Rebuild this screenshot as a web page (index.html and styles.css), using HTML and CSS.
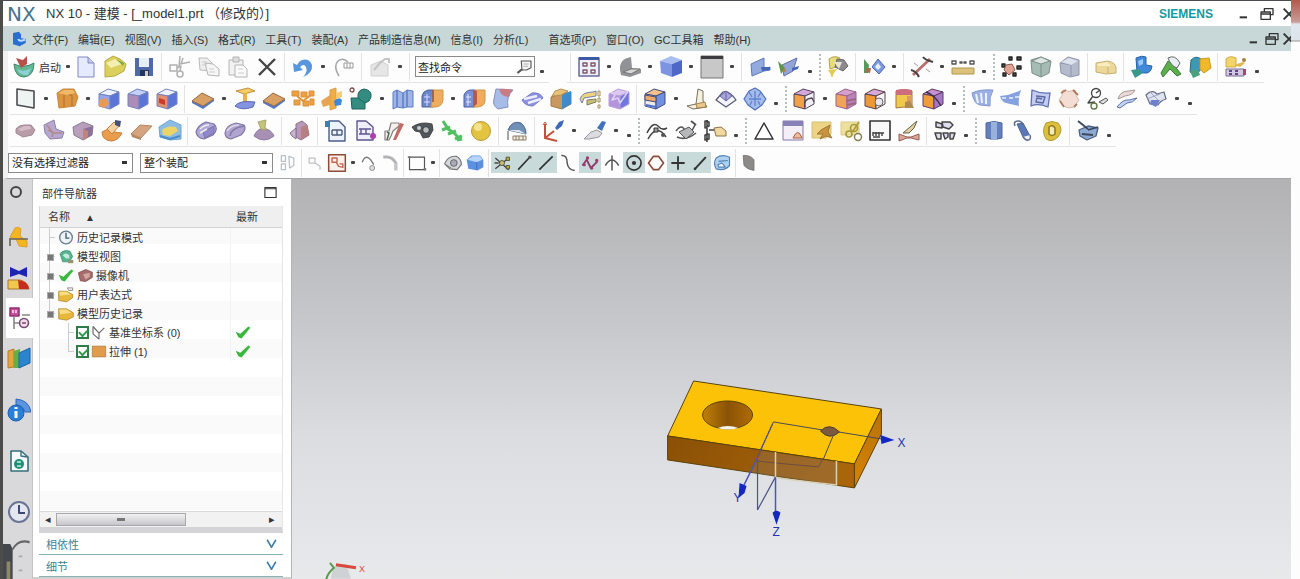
FILE: index.html
```html
<!DOCTYPE html>
<html lang="zh-CN">
<head>
  <meta charset="UTF-8">
  <title>NX 10 - 建模</title>
  <meta name="viewport" content="width=device-width, initial-scale=1.0">
  <link rel="stylesheet" href="styles.css">
</head>
<body>

<div class="app">

  <!-- Title bar -->
  <header class="titlebar">
    <span class="logo">NX</span>
    <h1>NX 10 - 建模 - [_model1.prt （修改的）]</h1>
    <span class="brand">SIEMENS</span>
    <div class="win-buttons">
      <button aria-label="最小化" data-icon="winMin"></button>
      <button aria-label="还原" data-icon="winRestore"></button>
      <button aria-label="关闭" data-icon="winClose"></button>
    </div>
  </header>

  <!-- Menu -->
  <nav class="menubar">
    <span class="menu-logo" data-icon="nxPart"></span>
    <a href="#">文件(F)</a>
    <a href="#">编辑(E)</a>
    <a href="#">视图(V)</a>
    <a href="#">插入(S)</a>
    <a href="#">格式(R)</a>
    <a href="#">工具(T)</a>
    <a href="#">装配(A)</a>
    <a href="#">产品制造信息(M)</a>
    <a href="#">信息(I)</a>
    <a href="#">分析(L)</a>
    <a href="#" class="apart">首选项(P)</a>
    <a href="#">窗口(O)</a>
    <a href="#">GC工具箱</a>
    <a href="#">帮助(H)</a>
    <div class="win-buttons small">
      <button aria-label="最小化部件" data-icon="winMin"></button>
      <button aria-label="还原部件" data-icon="winRestore"></button>
      <button aria-label="关闭部件" data-icon="winClose"></button>
    </div>
  </nav>

  <!-- Toolbars, data-tools is filled in by script.js -->
  <div class="toolbars">
    <div class="row row-main">
      <div class="group">
        <button class="start"><span data-icon="start"></span>启动<i class="dot-mark"></i></button>
        <span class="tools" data-tools="newFile open save | cut copy paste remove | undo . redo | note . |"></span>
        <div class="search">
          <input type="text" aria-label="查找命令" value="查找命令">
          <span data-icon="find"></span>
        </div>
        <span class="tools" data-tools=","></span>
      </div>
      <div class="group" data-tools="| fitView . shade . cubeBlue . background . | section sectionEdit , # faceSelect | wave . | measure . ruler , # explode shield boxGray | boxYellow | partBlue partGreen partTeal | calc ,"></div>
    </div>
    <div class="row">
      <div class="group" data-tools="plane . extrude . cubeHole cubePad cubeRed | slab . loft slab pattern boss unite . fold blend . blendTwo draft shell trim tube scale | cubeTop . bracket facet globe , # cubePink . cubeCut cubeFillet canister cubeSplit , # surfOne surfTwo surfText patch circles strips mesh . ,"></div>
    </div>
    <div class="row">
      <div class="group" data-tools="pill seat hexPart elbow bar hexYellow | lens lensTwo cone | tower | docIn docOut stitch cam comb ball | fan | csys . brush . , # curve curveTwo bridge , # triangle panel noteEdit noteLink textBox bow | parts , # cylinder pin ring | brushCube ,"></div>
    </div>
    <div class="row row-select">
      <select class="filter" aria-label="类型过滤器"><option>没有选择过滤器</option></select>
      <select class="scope" aria-label="选择范围"><option>整个装配</option></select>
      <div class="group picks" data-tools="dimPair | dimSmall snapBox . dimHook dimArc | rect . | eye cubeSmall |"></div>
      <div class="group snaps" data-tools="*snapAll *lineA *lineB snapCurve *snapPoly snapTee *snapCenter snapQuad *snapPlus *lineC snapFace"></div>
      <div class="group" data-tools="| leaf"></div>
    </div>
  </div>

  <main class="work">

    <!-- Resource bar -->
    <nav class="resources">
      <button aria-label="选项" class="res first" data-icon="gear"></button>
      <button aria-label="装配导航器" class="res" data-icon="navAssembly"></button>
      <button aria-label="约束导航器" class="res" data-icon="navConstraint"></button>
      <button aria-label="部件导航器" class="res active" data-icon="navPart"></button>
      <button aria-label="重用库" class="res" data-icon="books"></button>
      <button aria-label="HD3D" class="res tall" data-icon="info"></button>
      <button aria-label="浏览器" class="res tall" data-icon="webDoc"></button>
      <button aria-label="历史记录" class="res tall" data-icon="clock"></button>
      <span class="pen" data-icon="pen"></span>
    </nav>

    <!-- Part navigator -->
    <section class="navigator">
      <div class="nav-title">
        <h2>部件导航器</h2>
        <button aria-label="取消停靠" data-icon="dock"></button>
      </div>
      <div class="tree">
        <table>
          <thead>
            <tr><th>名称 <span class="sort">▲</span></th><th class="latest">最新</th></tr>
          </thead>
          <tbody>
            <tr><td><div class="node"><span class="twig"></span><span data-icon="history"></span>历史记录模式</div></td><td></td></tr>
            <tr><td><div class="node"><span class="twig plus"></span><span data-icon="views"></span>模型视图</div></td><td></td></tr>
            <tr><td><div class="node"><span class="twig plus"></span><span data-icon="tick"></span><span data-icon="camera"></span>摄像机</div></td><td></td></tr>
            <tr><td><div class="node"><span class="twig plus"></span><span data-icon="folderUser"></span>用户表达式</div></td><td></td></tr>
            <tr><td><div class="node"><span class="twig plus end"></span><span data-icon="folder"></span>模型历史记录</div></td><td></td></tr>
            <tr><td><div class="node sub"><span class="twig"></span><input type="checkbox" aria-label="基准坐标系" checked><span data-icon="datum"></span>基准坐标系 (0)</div></td><td><span data-icon="tick"></span></td></tr>
            <tr><td><div class="node sub"><span class="twig end"></span><input type="checkbox" aria-label="拉伸" checked><span data-icon="block"></span>拉伸 (1)</div></td><td><span data-icon="tick"></span></td></tr>
          </tbody>
        </table>
        <div class="scroll">
          <span class="arrow">◂</span>
          <span class="thumb"></span>
          <span class="arrow">▸</span>
        </div>
      </div>
      <button class="fold">相依性<span data-icon="chevron"></span></button>
      <button class="fold">细节<span data-icon="chevron"></span></button>
    </section>

    <!-- Graphics window -->
    <section class="viewport">
      <svg viewBox="291 179 1000 400" preserveAspectRatio="xMidYMid meet" role="img" aria-label="模型">
        <defs>
          <linearGradient id="front" x1="0" x2="1" y1="0" y2="0.2">
            <stop offset="0" stop-color="#8a5006"/>
            <stop offset="1" stop-color="#a9650a"/>
          </linearGradient>
          <linearGradient id="side" x1="0" x2="0" y1="0" y2="1">
            <stop offset="0" stop-color="#b8720c"/>
            <stop offset="1" stop-color="#d68400"/>
          </linearGradient>
          <linearGradient id="bore" x1="0" x2="1" y1="0" y2="0">
            <stop offset="0" stop-color="#c08008"/>
            <stop offset="0.5" stop-color="#8a5206"/>
            <stop offset="1" stop-color="#b06c06"/>
          </linearGradient>
        </defs>
        <g stroke="#5a4208" stroke-width="1" stroke-linejoin="round">
          <path d="M693 381L881 409L854 464L667 436Z" fill="#fcc208"/>
          <path d="M667 436L854 464V488L667 460Z" fill="url(#front)"/>
          <path d="M881 409V434L854 488V464Z" fill="url(#side)"/>
          <ellipse cx="727" cy="415" rx="25" ry="14" fill="url(#bore)"/>
        </g>
        <path d="M717 428Q727 424 738 428Q727 431 717 428Z" fill="#f2f2ee"/>
        <path d="M820 431Q829 422 839 432Q829 441 820 431Z" fill="#7d5a3c" stroke="#4d3c2c"/>
        <!-- sketch plane -->
        <path d="M762 451L836 462V486L775 477L750 472Z" fill="#8a7a70" opacity="0.3"/>
        <path d="M756 461L774 463L818 467L823 458" fill="none" stroke="#6e4c40"/>
        <path d="M775 452V478L836 485V461" fill="none" stroke="#d9d2b4" stroke-width="1.5"/>
        <path d="M773 422L822 430M833 435L823 459M773 422L760 450M838 432L881 439" fill="none" stroke="#4a4a50"/>
        <path d="M772 424L757 457M757 458V510L775 477" fill="none" stroke="#4c5488" stroke-width="1.2"/>
        <path d="M757 458L743 486M775 478V513" fill="none" stroke="#4a58b4" stroke-width="1.5"/>
        <g fill="#1428c0">
          <path d="M880 435L894 440L881 444Z"/>
          <path d="M739 483L746 486L744 493L738 498Z"/>
          <path d="M772 513Q776 509 780 513L776 525Z"/>
        </g>
        <g class="axis">
          <text x="897" y="447">X</text>
          <text x="733" y="502">Y</text>
          <text x="772" y="536">Z</text>
        </g>
        <!-- view triad -->
        <path d="M332 567L345 564L350 579H330Z" fill="#cfd2d4"/>
        <path d="M329 563L333 568Q326 574 325 581" fill="none" stroke="#5a9a50" stroke-width="2"/>
        <path d="M335 565L355 568" stroke="#d8483c" stroke-width="3"/>
        <text class="triad" x="358" y="572">X</text>
      </svg>
    </section>
  </main>
</div>

<aside class="edge"></aside>

<script src="script.js"></script>
</body>
</html>
```

FILE: styles.css
```css
* {
  box-sizing: border-box;
}

body {
  margin: 0;
  height: 100vh;
  display: flex;
  overflow: hidden;
  border-left: 3px solid #4c4c4a;
  background: #fdfdfd;
  color: #333;
  font-family: "Liberation Sans", "Noto Sans CJK SC", sans-serif;
  font-size: 11px;
}

button {
  padding: 0;
  border: none;
  background: none;
  font: inherit;
  color: inherit;
}

svg {
  display: block;
}

.app {
  flex: 1;
  min-width: 0;
  display: flex;
  flex-direction: column;
}

.edge {
  flex: 0 0 9px;
  background: linear-gradient(#b4584c, #c89c98 22px, #dfe6ee 24px, #dde4ea 40px, #999 41px, #fdfdfd 42px);
}

/* Title bar */
.titlebar {
  flex: 0 0 26px;
  display: flex;
  align-items: center;
  padding-left: 4px;
  border-top: 1px solid #4a4c54;
  background: #fff;
  line-height: 1;
}

.logo {
  width: 39px;
  font-family: "DejaVu Sans", sans-serif;
  font-size: 20px;
  color: #45728f;
}

h1 {
  flex: 1;
  margin: 0;
  font-size: 13px;
  font-weight: normal;
}

.brand {
  font-size: 12px;
  font-weight: bold;
  color: #129a9e;
}

.win-buttons {
  display: flex;
  align-items: center;
  gap: 6px;
  margin-left: 24px;
  margin-right: -6px;
}

.win-buttons svg {
  width: 16px;
  height: 16px;
}

.small {
  gap: 1px;
  margin-left: auto;
}

/* Menu */
.menubar {
  flex: 0 0 25px;
  display: flex;
  align-items: center;
  padding-left: 8px;
  background: #c8d8d8;
}

.menubar a {
  padding: 0 5px;
  color: #333;
  text-decoration: none;
  white-space: nowrap;
}

.menubar .apart {
  margin-left: 10px;
}

.menu-logo svg {
  width: 16px;
  height: 16px;
}

/* Toolbars */
.toolbars {
  border-left: 5px solid #f1f1f2;
  border-bottom: 1px solid #a4a4a6;
}

.row {
  display: flex;
  height: 32px;
  padding-left: 2px;
}

.group,
.tools {
  display: flex;
  align-items: center;
}

.group {
  border-bottom: 1px solid #e4e4e4;
}

.row-main .group + .group {
  margin-left: 18px;
}

.tool {
  display: flex;
  justify-content: center;
  width: 29px;
}

.tool svg,
.start svg {
  width: 24px;
  height: 24px;
}

.start {
  display: flex;
  align-items: center;
  width: 61px;
  padding-left: 2px;
  gap: 3px;
}

.dot {
  width: 13px;
}

.row-main .dot {
  width: 12px;
}

.more {
  width: 14px;
  padding-top: 10px;
}

.dot-mark {
  display: block;
  width: 4px;
  height: 3px;
  margin: 0 auto;
  border-radius: 1px;
  background: #444;
}

.sep {
  width: 1px;
  height: 28px;
  margin: 0 3px;
  background: #e2e2e2;
}

.grip {
  width: 2px;
  height: 26px;
  margin: 0 2px;
  border-left: 2px dotted #b4bcbc;
}

.search {
  display: flex;
  align-items: center;
  width: 120px;
  height: 21px;
  margin-left: 2px;
  border: 1px solid #8a8a8a;
}

.search input {
  flex: 1;
  min-width: 0;
  padding: 0 2px;
  border: none;
  font: inherit;
  color: #222;
}

.search svg {
  width: 18px;
  height: 18px;
}

.row-select {
  height: 31px;
  padding-left: 0;
  align-items: center;
}

.row-select .group {
  border: none;
}

select {
  appearance: none;
  height: 20px;
  padding: 0 3px;
  border: 1px solid #8a8a8a;
  border-radius: 0;
  background: linear-gradient(#333, #333) no-repeat right 5px center / 5px 3px, #fff;
  font: inherit;
  color: #222;
}

.filter {
  width: 125px;
  margin-right: 7px;
}

.scope {
  width: 133px;
}

.picks {
  margin-left: 4px;
}

.row-select .tool {
  width: 22px;
}

.row-select .tool svg {
  width: 20px;
  height: 20px;
}

.row-select .dot {
  width: 9px;
}

.row-select .sep {
  margin: 0 2px;
}

.snaps .tool {
  height: 21px;
  align-items: center;
}

.snaps .on {
  background: #c8dada;
}

/* Work area */
.work {
  flex: 1;
  min-height: 0;
  display: flex;
}

.resources {
  width: 30px;
  display: flex;
  flex-direction: column;
  background: #d9d9db;
  border-right: 1px solid #c4c4c6;
}

.res {
  flex: 0 0 40px;
  display: flex;
  align-items: center;
  justify-content: center;
  padding-left: 3px;
}

.res svg {
  width: 24px;
  height: 26px;
}

.first {
  flex-basis: 39px;
  align-items: flex-start;
  padding-left: 0;
}

.tall {
  flex-basis: 51px;
  padding-top: 12px;
}

.active {
  margin: 0 -1px 0 3px;
  padding-left: 0;
  background: #fff;
}

.pen {
  margin-top: auto;
}

.pen svg {
  width: 29px;
  height: 42px;
}

/* Navigator */
.navigator {
  width: 259px;
  display: flex;
  flex-direction: column;
  padding: 0 8px 0 6px;
  background: #fff;
  border-right: 1px solid #b4b4b8;
  border-bottom: 2px solid #d0d0cc;
}

.nav-title {
  height: 27px;
  display: flex;
  align-items: center;
  justify-content: space-between;
  padding: 0 5px 0 3px;
}

h2 {
  margin: 0;
  font-size: 11px;
  font-weight: normal;
}

.nav-title svg {
  width: 15px;
  height: 15px;
}

.tree {
  flex: 1;
  min-height: 0;
  display: flex;
  flex-direction: column;
  border-left: 1px solid #d8d8da;
  border-right: 1px solid #e6e6e6;
  border-bottom: 6px solid #d4d4d6;
  background: repeating-linear-gradient(#fff 0 19px, #fafafa 19px 38px);
}

table {
  width: 100%;
  border-collapse: collapse;
}

th {
  height: 21px;
  padding: 0 8px;
  border-bottom: 1px solid #d4d4d4;
  background: #efefef;
  font-weight: normal;
  text-align: left;
}

.sort {
  margin-left: 12px;
  font-size: 10px;
}

.latest {
  width: 52px;
  padding: 0 6px;
}

td {
  height: 19px;
  padding: 0;
}

td + td {
  border-left: 1px solid #f2f2f2;
  padding-left: 4px;
}

.node {
  display: flex;
  align-items: center;
  gap: 3px;
  height: 19px;
  padding-left: 9px;
}

.node svg,
td svg {
  width: 16px;
  height: 17px;
}

.sub {
  gap: 2px;
  padding-left: 28px;
}

/* connector lines */
.twig {
  align-self: stretch;
  width: 6px;
  border-left: 1px solid #ccc;
  background: linear-gradient(#ccc, #ccc) no-repeat left center / 6px 1px;
}

.twig.end {
  height: 10px;
  align-self: flex-start;
  background-position: left bottom;
}

.twig.plus::before {
  content: "";
  display: block;
  width: 5px;
  height: 5px;
  margin: 7px 0 0 -3px;
  border: 1px solid #aaa;
  background: #777;
}

.node input {
  appearance: none;
  width: 13px;
  height: 13px;
  margin: 0;
  border: 2px solid #2e7d48;
  background: #fff;
}

.node input:checked::before {
  content: "";
  display: block;
  width: 7px;
  height: 4px;
  margin: 1px;
  border-left: 2px solid #2e9a4c;
  border-bottom: 2px solid #2e9a4c;
  transform: rotate(-45deg);
}

.scroll {
  display: flex;
  align-items: center;
  justify-content: space-between;
  height: 16px;
  margin-top: auto;
  padding: 0 7px 0 5px;
  border-top: 1px solid #d8d8d8;
  background: #f2f2f3;
  line-height: 1;
}

.thumb {
  width: 130px;
  height: 13px;
  margin-left: 5px;
  margin-right: auto;
  border: 1px solid #a8a8ac;
  background: linear-gradient(#777, #777) no-repeat center / 8px 3px, linear-gradient(#f2f2f4, #c6c6ca);
}

.fold {
  display: flex;
  align-items: center;
  justify-content: space-between;
  height: 22px;
  padding: 0 4px 0 7px;
  border-bottom: 1px solid #8ab0ba;
  color: #3c8294;
}

.fold svg {
  width: 15px;
  height: 15px;
}

/* Graphics window */
.viewport {
  flex: 1;
  min-width: 0;
  background: linear-gradient(#b2b2b4, #c6c7ca 35%, #dcdde1 65%, #e8e9eb);
}

.viewport svg {
  width: 100%;
  height: 100%;
}

.axis {
  font-size: 12px;
  fill: #1c34b4;
}

.triad {
  font-size: 9px;
  fill: #d8483c;
}
```

FILE: script.js
```javascript
// small drawing helpers, every icon lives in a 24x24 box
const p = (d, fill = 'none', stroke = 'none', w = 1) =>
  `<path d="${d}" fill="${fill}" stroke="${stroke}" stroke-width="${w}" stroke-linejoin="round"/>`;
const c = (x, y, r, fill = 'none', stroke = 'none', w = 1) =>
  `<circle cx="${x}" cy="${y}" r="${r}" fill="${fill}" stroke="${stroke}" stroke-width="${w}"/>`;
const cube = (top, left, right, line = '#7484bc') =>
  p('M2 7L11 2L22 5L13 9Z', top, line) + p('M2 7L13 9V22L2 19Z', left, line) + p('M13 9L22 5V17L13 22Z', right, line);
const slab = (top, side) =>
  p('M1 14L12 19L23 12V14L12 22L1 16Z', side) + p('M1 14L11 6L23 12L12 19Z', top, '#8f6a48');

const icons = {
  winMin: p('M4 17H15', 'none', '#333', 3),
  winRestore: p('M8 8V4H21V13H17M3 9H17V20H3ZM3 12H17', 'none', '#333', 2),
  winClose: p('M4 4L20 20M20 4L4 20', 'none', '#333', 3),
  nxPart: p('M3 3L12 1L15 5V11L22 12V18L13 23L3 20Z', '#2a6ed0') + p('M11 12Q12 17 21 13', 'none', '#bfe0fa', 3),

  start: p('M2 9Q12 14 22 8Q22 21 12 22Q3 22 2 9Z', '#62b890', '#3d8870') + p('M4 3L11 5L15 1V9L9 13Z', '#b5524a') + p('M5 14Q12 18 19 13L16 20Q8 21 5 14Z', '#8fd0d8'),
  newFile: p('M4 2H14L20 8V22H4Z', '#e6eaff', '#8088c0') + p('M14 2V8H20', '#c4caf0', '#8088c0'),
  open: p('M2 6L10 1L17 4L23 9L21 16L12 21L2 22Z', '#dcd05c', '#b4a848') + p('M3 8L12 4L19 9L8 13Z', '#f4eeb0') + p('M13 4L21 8L20 11Z', '#7ca848'),
  save: p('M3 3H21V21H3Z', '#5069a8') + p('M7 3H17V12H7Z', '#e6eef8') + p('M8 15H17V21H8Z', '#26355c') + p('M13 16H16V21H13Z', '#ccc'),
  cut: p('M12 1L11 12M2 10H9V16H2ZM12 9L22 7M15 3L13 9', 'none', '#b0b0b0', 1.5) + c(12, 19, 3, 'none', '#b0b0b0', 1.5) + p('M9 13L13 11L12 16', 'none', '#b0b0b0', 1.5),
  copy: p('M2 3H10L15 8V16L3 15Z', '#eee', '#bbb') + p('M8 8L16 9L22 14V21L11 20Z', '#f6f6f6', '#b4b4b4') + p('M5 7H10M5 10H10M12 14H17M12 17H18', 'none', '#ccc'),
  paste: p('M3 5H17V20H3Z', '#f2f2f2', '#b4b4b4') + p('M7 2H13V7H7Z', '#ddd', '#b4b4b4') + p('M9 10H17L21 14V22H9Z', '#fafafa', '#b4b4b4') + p('M12 14H17M12 18H18', 'none', '#ccc'),
  remove: p('M4 4L20 20M20 4L4 20', 'none', '#444', 2.4),
  undo: p('M2 8L3 17L12 15L9 12Q13 8 15 12Q17 17 12 22Q22 18 21 10Q18 3 11 5Q8 6 6 10Z', '#5a96dc'),
  redo: p('M7 21Q1 11 6 6Q11 2 16 7', 'none', '#a4a8ac', 1.6) + p('M12 8H21V13H12ZM15 8V13M18 8V13', 'none', '#999'),
  note: p('M3 10L13 6L20 10V21H3Z', '#e6e6e6', '#d0d0d0') + p('M6 15L12 8L17 4H21V8', 'none', '#c4c4c4', 2),
  find: p('M7 4H20V13L14 16H8Z', '#f4f4f4', '#555', 1.5) + p('M8 15L2 20', 'none', '#555', 3) + p('M10 8H17M10 11H16', 'none', '#999'),

  fitView: p('M2 3H22V21H2Z', '#eef0fa', '#6a6a98', 1.5) + p('M2 2H22V5H2Z', '#3f58a4') + p('M6 8H10V11H6ZM14 8H18V11H14ZM6 15H10V18H6ZM14 15H18V18H14Z', 'none', '#805868', 1.4),
  shade: p('M2 15Q1 4 13 2L14 13L23 14V18L12 22L3 20Z', '#909296') + p('M13 14L22 14L13 19L5 17Z', '#d6d6d8', '#777'),
  cubeBlue: p('M1 6L12 1L23 5L13 9Z', '#a8bdf0') + p('M1 6L13 9V22L2 18Z', '#7d94e2') + p('M13 9L23 5V18L13 22Z', '#4f68c8'),
  background: p('M1 1H23V23H1Z', '#c8c8c8', '#777') + p('M1 1H23V4H1Z', '#3c3c40'),
  section: p('M3 9L16 3V14L22 12V15L16 16L4 21Z', '#93aae0', '#5f78b8') + p('M13 12H22V15L14 16Z', '#4668b4'),
  sectionEdit: p('M5 10L20 3L16 16L7 21Z', '#93a4d8', '#5f70a8') + p('M1 6L8 13L4 19Z', '#5d9648') + p('M15 13L22 11L21 14L15 16Z', '#4668b4') + p('M5 16L8 13L9 17Z', '#b88040'),
  faceSelect: p('M3 4Q8 0 14 3L10 12L4 14Z', '#e8dc7c', '#b0a250') + p('M11 4L18 5L22 11L17 16L9 12Z', '#8d8b90', '#666') + p('M8 7L16 7L13 14Z', '#e9e4d0') + p('M2 15L11 14L8 18L6 23L4 18Z', '#e2cb50'),
  wave: p('M2 4L7 10L6 18H2Z', '#589858') + p('M5 13L9 13L8 18L3 17Z', '#a86c50') + p('M16 4L23 12L17 19L10 12Z', '#7c9ae0', '#4868b0') + p('M16 8L19 12L16 15L13 12Z', '#e8eefa'),
  measure: p('M3 20L20 4', 'none', '#b87070', 3) + p('M13 2Q15 5 23 7M1 15Q6 16 9 22', 'none', '#444', 2) + p('M4 8L8 11M16 14L20 17', 'none', '#999'),
  ruler: p('M1 6H5V9H1ZM9 7H11V8H9ZM13 7H15V8H13ZM19 6H23V9H19Z', 'none', '#555', 1.4) + p('M1 13H23V19H1Z', '#dcc27c', '#b09850'),
  explode: p('M9 2H12V5H9ZM17 2H21V5H17ZM17 11H21V14H17ZM2 9H5V12H2ZM3 18H6V21H3ZM13 18H16V21H13Z', '#555', '#222', 1.4) + p('M6 10L12 9L15 15L9 20L4 15Z', '#e0a494', '#9a5a50'),
  shield: p('M2 5L12 2L22 6L20 18L12 22L3 18Z', '#a4bcb4', '#7c9088') + p('M3 6L12 9L21 6L12 2Z', '#dce6e2', '#7c9088') + p('M12 9V22', 'none', '#7c9088'),
  boxGray: p('M2 8L10 2L21 5V20L12 22L3 18Z', '#b4bccc', '#8a94ac') + p('M3 8L13 10V21', 'none', '#8a94ac') + p('M3 7L11 3L20 6L13 10Z', '#dde2ec'),
  boxYellow: p('M2 8L14 6Q22 8 22 13V18L12 19L2 17Z', '#ecd898', '#c4b070') + p('M3 9L13 7L17 11H4Z', '#f8ecc0') + p('M14 12V18', 'none', '#c4b070'),
  partBlue: p('M6 3Q12 0 16 2V10L22 11Q21 19 14 18L7 17Z', '#4088d8', '#2860a8') + p('M1 15L9 14L13 18L5 23Z', '#38988c') + p('M8 6L13 4V9L9 11Z', '#9ccaf4'),
  partGreen: p('M2 18L9 6L14 9L22 19L18 21L11 14L4 22Z', '#5cae4a', '#3c7c38') + p('M9 3Q16 -1 21 8L18 13Q12 11 9 3Z', '#e8eef4', '#666'),
  partTeal: p('M3 5Q8 0 13 4L15 12L8 20L2 17Z', '#3c98b4', '#286c88') + p('M12 4L21 3L23 13L16 18L12 14Z', '#f0b82c', '#c89820') + p('M2 16L10 14L12 20L5 23Z', '#4aa080'),
  calc: p('M2 4Q6 0 12 3V12H2Z', '#f2d468', '#d0ac48') + p('M10 10L19 7L21 8L16 12Z', '#e0b84c') + c(20, 5, 2, '#a08440') + p('M2 14H20V21H2Z', '#d2c8e2', '#7c6898') + p('M5 16H8M11 16H14M5 19H8M11 19H14', 'none', '#5c4880', 2) + p('M19 14H22V20H19Z', '#b83c6c'),

  plane: p('M4 2L21 4V21L4 18Z', '#eef4f2', '#4c4c50', 1.6),
  extrude: p('M2 6L8 2H19L23 10L20 19L4 21Z', '#dc9440', '#c88838') + p('M9 8V20M14 8H17V19', 'none', '#a87030') + p('M3 6L9 3H18L20 6L12 8Z', '#f0b868'),
  cubeHole: cube('#eef2ff', '#94a6ee', '#5a74d8') + p('M2 13L9 11L12 17L7 21L2 19Z', '#ec9850'),
  cubePad: cube('#c4d0fa', '#ac8cb8', '#5a74d8'),
  cubeRed: cube('#eef2ff', '#e0906c', '#5a74d8') + p('M4 11L10 13V18L4 16Z', '#c83c2c'),
  slab: slab('#d8a064', '#5578c4'),
  loft: p('M3 4L15 1L22 4L11 7Z', '#f4cc68', '#c09038') + p('M10 7L14 6V15H10Z', '#e8b050') + p('M2 19Q6 13 22 15L20 20Q9 24 2 19Z', '#8494e0', '#5868b4'),
  pattern: p('M1 4H8V9H1ZM10 5H16V10H10ZM18 4H23V9H18ZM3 13H9V18H3ZM12 14H18V19H12ZM19 12H23V18H19Z', '#eca040', '#d89038') + p('M6 9L12 14L20 8', 'none', '#e09434', 2),
  boss: p('M10 3L16 1V21L10 23Z', '#f0ac48', '#dca048') + p('M1 14L10 8V18L3 20Z', '#e8a450') + p('M14 14Q19 9 22 13L21 18L15 19Z', '#3c88dc') + p('M16 6L22 4V10L16 12Z', '#f6cc78'),
  unite: p('M2 11H9Q8 3 15 2Q23 3 22 10Q21 15 16 16V22H3Z', '#348c80', '#20645c') + p('M9 11L16 16', 'none', '#20645c') + c(3, 3, 2, '#fff', '#804848', 1.3),
  fold: p('M2 5L6 3V20L2 22ZM6 3L12 6V21L6 20ZM12 6L16 3V20L12 21ZM16 3L22 4V20L16 20Z', '#a0b4e8', '#5c7cc4'),
  blend: p('M2 9Q3 4 8 3H13V20H2Z', '#6c86cc', '#4c60a0') + p('M13 3H23V13Q22 20 15 20H11Z', '#eeac5c', '#d09848') + p('M4 10H10M4 15H10M7 7V19', 'none', '#d4e0f8') + p('M13 3V15', 'none', '#8c5444', 1.5),
  blendTwo: p('M2 8Q4 3 9 3H13V20H2Z', '#7c90d4', '#4c60a0') + p('M13 3H23V14Q22 20 15 20H12Z', '#eeac5c', '#d09848') + p('M11 3L15 4V17L11 20Z', '#b05c4c') + p('M4 10H9M4 15H9M6 7V19', 'none', '#e4eafa'),
  draft: p('M5 2L22 3Q15 10 17 20L7 22Q1 18 3 12Z', '#a8bce8', '#8890bc') + p('M8 2Q14 1 22 3Q18 6 18 10Q10 10 8 2Z', '#c87c84'),
  shell: p('M2 13L12 6Q20 5 23 11L13 19Q5 19 2 13Z', '#8c90e0', '#747cc4') + p('M4 12L17 9M8 16L21 12', 'none', '#eef', 2.5),
  trim: p('M2 10L12 7L22 5V17L13 22L2 19Z', '#c89860', '#a07840') + p('M13 8L22 4V17L13 22Z', '#3c8ccc') + p('M6 4L12 2L19 4L12 8L3 9Z', '#e8c078', '#b89458'),
  tube: p('M2 12Q4 5 15 5L18 4V9L6 11L4 16Z', '#f0d480', '#7080b0') + p('M9 13L18 12V15L9 18Z', '#c8c078', '#808060') + p('M20 4H22V9H20ZM20 11H22V15H20ZM20 18H22V21H20Z', 'none', '#a89048'),
  scale: cube('#dcc8f0', '#b494dc', '#7078dc', '#b8a0dc') + p('M4 5L8 8L5 13L11 11L13 16L18 9L21 4', 'none', '#dcd4f4', 1.5),
  cubeTop: cube('#f4c08c', '#ecece8', '#7090e0', '#444c80') + p('M2 8L13 10V15L2 13Z', '#f0a868', '#444c80') + p('M3 18L13 20', 'none', '#5070d0', 2),
  bracket: p('M13 2L18 4V14L22 20L8 22L2 19L11 17Z', '#f6f0e0', '#77705c') + p('M11 17L20 15L21 20L12 21Z', '#ecc888', '#a08454'),
  facet: p('M2 13L9 5Q15 3 22 13L12 20Z', '#f4f4fc', '#5c5c78', 1.3) + p('M6 9L12 4L18 9L12 14Z', '#a8a4dc', '#6864a4') + p('M12 4V14', 'none', '#6864a4'),
  globe: p('M12 1L17 4L23 12L19 18L12 23L5 18L1 12L6 4Z', '#a4bcec', '#5070b8', 1.2) + p('M12 4V19M6 12H18M6 5L9 10M18 5L15 10M7 18L9 14M17 18L15 14', 'none', '#5c80cc', 1.3),
  cubePink: cube('#d4a8dc', '#f0a048', '#f0f0f4', '#554458') + p('M13 20Q11 12 20 11L22 15', 'none', '#554458', 1.3),
  cubeCut: cube('#d4a0cc', '#f0a458', '#b884bc', '#a0608c') + p('M12 14L22 12M13 18L22 16', 'none', '#9c6880', 2),
  cubeFillet: cube('#d8a8d8', '#f09838', '#f4f4f4', '#5a4448') + c(16, 15, 4, '#e4e8ec', '#666'),
  canister: p('M4 4Q12 1 20 4V19L4 21Z', '#f0c84c', '#a07838') + p('M4 3Q12 1 20 3V8H4Z', '#cc6c7c') + p('M15 9H20V21H15Z', '#dc9c60') + p('M13 15L18 14L22 21H13Z', '#b08854'),
  cubeSplit: cube('#c890d0', '#f09c38', '#a878c8', '#583c68') + p('M5 5Q14 8 20 19', 'none', '#3c3048', 1.5),
  surfOne: p('M2 6Q10 2 23 3Q19 10 20 19L10 18Q4 17 2 6Z', '#9cb0e8', '#8498d0') + p('M6 7L8 16M11 6L12 16M16 6V17', 'none', '#eef4ff', 2),
  surfTwo: p('M1 9Q12 8 22 3Q19 10 20 19L7 16Q3 15 1 9Z', '#86a0e0') + p('M3 11H7M10 11H14M16 10H20', 'none', '#e8f0ff', 1.5),
  surfText: p('M4 3Q13 7 22 6L20 20Q10 16 3 19Z', '#c4ccf0', '#6070b0', 1.3) + p('M8 9L17 10L15 16L8 15L9 11L14 12', 'none', '#5c68a0', 1.4),
  patch: p('M6 3Q12 6 18 3Q18 9 22 13L17 20L12 21L6 19L2 13Q6 9 6 3Z', '#f4ddd2', '#d4b8ac') + p('M4 6L9 3M16 3L21 8M20 17L17 20M3 14L7 20', 'none', '#b07858', 1.8),
  circles: c(10, 6, 4.5, 'none', '#444', 1.3) + p('M7 9L2 16L9 15M10 6L14 3', 'none', '#444', 1.3) + c(8, 19, 3, 'none', '#587840', 1.3) + p('M13 15L20 11L22 13L17 17Z', '#ddd', '#555'),
  strips: p('M3 12Q5 4 14 4L20 3Q18 8 10 9Z', '#ecd8d8', '#a89898') + p('M2 20Q8 12 14 13L22 11Q18 16 12 16L5 21Z', '#c4d4f0', '#5c70a8'),
  mesh: p('M2 8Q8 2 13 7L20 5L22 12Q16 14 14 18L6 17Z', '#e0e4f0', '#666c88', 1.2) + p('M7 13H16L12 20L6 17Z', '#6c80cc') + p('M6 5L14 13M3 12L16 7', 'none', '#a0a4bc'),

  pill: p('M3 10Q6 6 11 6H18L22 11L19 16L10 18L3 14Z', '#b89ca8', '#a08894') + p('M5 10L11 7H17L18 10L8 12Z', '#d4bcc4'),
  seat: p('M2 6L12 1L14 10L22 13L20 19L8 20L3 14Z', '#b8a8d0', '#8c80ac') + p('M5 6L11 14L20 14M6 11L11 14L10 18', 'none', '#b08888', 1.4),
  hexPart: p('M2 8L12 3L22 7L21 16L12 21L3 16Z', '#b8a0bc', '#887890') + p('M12 10L22 7L21 16L12 21Z', '#8c7098') + p('M12 10L17 12V18L12 21Z', '#c08478'),
  elbow: p('M2 13L8 10L14 13L22 14Q18 22 11 22Q2 21 2 13Z', '#e89c4c', '#c88038') + p('M7 10L14 3L19 7L12 15Z', '#f4d0a0', '#c88038') + p('M15 1L21 2L20 8L15 6Z', '#405078'),
  bar: p('M2 15L11 6L23 7L12 19Z', '#d4a480', '#b48860') + p('M2 15L12 19L12 21L3 18Z', '#b48860'),
  hexYellow: p('M1 8L12 1L23 6V20L12 21L2 18Z', '#8cbce4', '#70a4d0') + p('M4 11Q9 6 18 8L20 12L12 17L5 16Z', '#ecd468') + p('M2 17L12 20L22 17', 'none', '#4c8cc8', 2),
  lens: p('M2 13Q4 6 12 3L20 5Q25 10 19 16L10 20Q3 19 2 13Z', '#b0a8d8', '#7c74a8', 1.2) + p('M9 13L20 7V14L11 19Z', '#9088cc', '#7c74a8') + p('M6 10Q10 6 15 6M6 14L13 10', 'none', '#eee', 1.6),
  lensTwo: p('M2 14Q3 6 13 4L21 6Q24 10 18 16L8 20Q2 19 2 14Z', '#b0a4d0', '#8078a4', 1.2) + p('M7 17Q8 9 21 7', 'none', '#8078a4', 1.5) + p('M4 12Q8 6 16 6', 'none', '#e0d8ec', 1.5),
  cone: p('M2 17Q5 10 11 9Q20 11 22 17Q12 25 2 17Z', '#a890b4', '#907c9c') + p('M6 3L14 1L13 8L14 11L9 10Z', '#c4c47c', '#a8a868'),
  tower: p('M8 5L14 2L19 6L21 16L13 21L8 18Z', '#b898b8', '#88708c') + p('M2 14L8 9V20L4 17Z', '#c8b4d0', '#88708c') + p('M13 8L19 6L21 16L13 21Z', '#b88080'),
  docIn: p('M5 2H15L21 8V22H5Z', '#eef2fa', '#4c5c88', 1.4) + p('M1 2H6V8H1Z', '#3c80b0') + p('M8 11H18M8 16H18M8 11V16M13 11V16M18 11V16', 'none', '#4c5c78', 1.4),
  docOut: p('M4 2H13L20 8V21H4Z', '#f0eefa', '#5c5490', 1.4) + p('M6 10H18M6 15H17M8 10V15M13 10V15', 'none', '#5c5490', 1.4) + c(20, 17, 3, '#b03cb0'),
  stitch: p('M3 21V12H7L9 4H17V7L11 12L9 17L7 21Z', '#f4f0ee', '#88807c', 1.2) + p('M18 4L22 5L14 21H11Z', '#c06c64') + p('M5 13L7 14L5 21', 'none', '#4c6c58', 1.5),
  cam: p('M1 8Q10 2 21 5L22 11L18 18L12 19L9 13L4 12Z', '#50585e', '#444') + c(8, 9, 2, '#ccc') + c(15, 11, 3.4, '#b8bcc0', '#333'),
  comb: p('M3 2L8 10L14 14L21 21M2 11L10 8M8 15L16 12M15 20L22 17M17 21L22 20', 'none', '#50c060', 3),
  ball: c(12, 12, 9.5, '#e2c440', '#b49c38') + c(9, 8, 4, '#f4e28c'),
  fan: p('M3 11Q7 1 16 4Q21 8 21 15L3 11Z', '#7090b8', '#4c6488') + p('M3 12V21', 'none', '#888', 1.5) + p('M3 11L14 11L21 15Z', '#e4e8ee') + p('M8 17H21V21H8ZM11 17V21M14 17V21M18 17V21', '#f4ece0', '#8c7c68'),
  csys: p('M4 5V19L16 22M4 19L13 12', 'none', '#c4503c', 2) + p('M14 9L18 3L23 1L21 7L16 11Z', '#3f68b8') + p('M2 6L4 3L6 6', 'none', '#c4503c'),
  brush: p('M1 20L8 13L14 11L19 14L16 18L6 20Z', '#dcdce0', '#98989c') + p('M14 9L19 2L23 3L19 12Z', '#4470bc'),
  curve: p('M2 14Q8 2 13 7Q17 12 22 9M3 20Q12 4 21 18', 'none', '#444', 1.5) + p('M9 9H13V13H9Z', '#999', '#333') + c(18, 16, 2, '#555'),
  curveTwo: p('M2 12Q8 4 11 12Q14 20 21 6M3 18Q12 22 22 14', 'none', '#555', 1.6) + p('M5 13L15 8L20 13L12 20Z', '#b4b8b8', '#555') + p('M17 2L22 6', 'none', '#555', 2),
  bridge: p('M4 1V23M2 2L6 3V7L2 9ZM2 16L6 15V20L2 21ZM6 11H11', 'none', '#444', 1.6) + p('M11 9L18 8L23 12V17H13Z', '#f0d8a0', '#8c7444'),
  triangle: p('M12 4L21 20H3Z', '#fff', '#333', 1.5),
  panel: p('M2 2H22V21H2Z', '#f4eef6', '#8878a8') + p('M2 2H22V7H2Z', '#8880b8') + p('M12 19Q17 8 21 19Z', '#f0bca0', '#a86040'),
  noteEdit: p('M2 3H21V15L16 19H2Z', '#ecd484', '#d4c078') + p('M11 11L20 6L18 13L22 19L16 17L10 20L13 15L7 15Z', '#c89440', '#a07838'),
  noteLink: p('M2 3H20V16H2Z', '#ece09c', '#d8cc90') + c(15, 9, 3.5, 'none', '#a89838', 1.6) + c(10, 15, 3, 'none', '#a89838', 1.6) + c(19, 18, 3.5, '#fff', '#807c50', 1.4) + p('M20 3L14 12', 'none', '#a89838', 1.5),
  textBox: p('M2 2H22V21H2Z', '#f8f8f8', '#333', 1.6) + p('M5 13V17M8 13V17M11 13V17M14 14V17M5 18H12M5 14H16', 'none', '#444', 1.4),
  bow: p('M2 15L10 18H14L22 15V21L14 19H10L2 22Z', '#d8a898', '#985c50') + p('M6 14L20 2L17 9L12 14Z', '#e0d0a0', '#666048'),
  parts: p('M3 3L9 5V9L3 8ZM9 3H17L20 6L16 10L10 8ZM2 14H8V20H4ZM10 14H15V18L12 20ZM17 14H22L20 20H17Z', '#dde', '#444', 1.5),
  cylinder: p('M4 4Q12 1 20 4V19Q12 22 4 19Z', '#6480bc', '#5068a0') + p('M9 3H15V21H9Z', '#98b0dc'),
  pin: p('M6 5L12 4L19 17L16 21L12 18Z', '#5a78b8', '#4c6498') + p('M4 7Q2 2 7 2Q11 2 12 6', 'none', '#5c6c90', 1.5) + p('M12 18Q16 23 19 20Q20 18 19 16', '#f4f4f4', '#5c6c90', 1.5),
  ring: p('M6 4Q12 1 18 4Q24 10 18 18Q12 24 6 20Q1 12 6 4Z', '#dcc03c', '#b09c38') + p('M9 8Q12 5 15 9V15Q12 18 9 15Z', '#f4ecb8', '#907c20', 1.6),
  brushCube: p('M3 11L12 7L22 9L20 17L11 21L4 17Z', '#8ca8d4', '#4c6080', 1.3) + p('M2 2L12 10M12 11L22 8M6 15L17 16', 'none', '#3c4858', 1.8),

  dimPair: p('M4 3H9V10H4ZM4 13H9V20H4ZM13 4L19 6V15L14 18Z', 'none', '#b8c0c4', 1.5),
  dimSmall: p('M5 6H12V12H5Z M12 12L18 16V20', 'none', '#c0c0c4', 1.5),
  snapBox: p('M2 2H22V22H2Z', '#fdf0ea', '#8c4c38', 1.8) + p('M6 6H12V11H6ZM11 11L14 16L18 17M15 13H19V18', 'none', '#c46450', 1.7),
  dimHook: p('M5 11Q9 1 15 8L19 14', 'none', '#777', 1.6) + c(17, 18, 3, '#ddd', '#888'),
  dimArc: p('M4 5Q14 3 19 12V21', 'none', '#c4c4c8', 4) + p('M4 5Q14 3 19 12', 'none', '#999'),
  rect: p('M3 5H21V20H3Z', 'none', '#555', 1.4) + p('M1 4H4V6H1ZM20 18H23V21H20Z', '#777'),
  eye: p('M2 13Q6 3 16 4Q22 7 22 14L17 20L8 19Z', '#d4d8dc', '#777', 1.4) + c(13, 12, 4, '#a8acb8', '#555') + p('M3 14L10 18', 'none', '#666'),
  cubeSmall: p('M2 8L8 3H18L22 8V17L15 21L4 19Z', '#5c90e0') + p('M3 8L9 4H18L21 8L14 11Z', '#b8d4f8') + p('M14 11V20', 'none', '#3c68b8'),
  snapAll: p('M4 6L20 20M4 19L20 6M3 12H8', 'none', '#444', 1.6) + p('M17 5H21V9H17ZM17 15H21V19H17Z', '#b8a848', '#4c4828') + c(12, 12, 3, '#d0c060', '#444'),
  lineA: p('M5 20L18 6', 'none', '#333', 2) + c(19, 5, 2, '#555'),
  lineB: p('M4 20L20 4', 'none', '#333', 2),
  snapCurve: p('M4 3Q11 2 11 12Q12 20 20 21', 'none', '#555', 1.8),
  snapPoly: p('M3 15L8 8L13 18L21 10', 'none', '#8c3868', 2.2) + c(5, 14, 2, '#a03c70') + c(9, 6, 2, '#a03c70') + c(14, 18, 2, '#a03c70') + c(20, 9, 2, '#a03c70'),
  snapTee: p('M12 3V21M4 15Q12 2 20 15', 'none', '#555', 1.8),
  snapCenter: c(12, 12, 8.5, 'none', '#333', 2) + c(12, 12, 2.5, '#333'),
  snapQuad: p('M9 4H15L21 12L15 20H9L3 12Z', 'none', '#8c4c3c', 2),
  snapPlus: p('M12 4V20M4 12H20', 'none', '#333', 2.2),
  lineC: p('M6 19L19 5', 'none', '#333', 2.4) + c(6, 19, 1.6, '#333'),
  snapFace: p('M5 6Q12 1 21 5V15Q15 22 5 19Q1 12 5 6Z', '#b0d0f0', '#5080b4', 1.4) + p('M8 10L19 9M7 14L12 12L16 17H8Z', '#f0f6fc', '#5080b4', 1.4),
  leaf: p('M5 3Q13 2 18 8V21Q10 20 6 15Z', '#8c8a88', '#767472'),

  gear: c(10, 12, 5, 'none', '#444', 2),
  navAssembly: p('M8 2Q12 0 14 3L13 10L20 15V21L12 20L9 13L3 11Z', '#f4b424', '#dca030') + p('M3 12V20M3 13H21', 'none', '#6c6450', 1.6),
  navConstraint: p('M3 1L12 5L20 1V11L12 8L3 11Z', '#1c24b4') + p('M1 14H13Q21 16 22 23H1Z', '#f0c850', '#a87428') + p('M11 14Q21 15 22 23H12Z', '#c42c20'),
  navPart: p('M2 2H11V10H2Z', '#c8509c', '#8c3070', 1.5) + p('M5 4V7M8 4V7', 'none', '#fff', 1.3) + p('M6 11V23M6 17H12M14 9H22', 'none', '#888', 1.6) + c(16, 17, 4.5, '#f2dcec', '#784c70', 1.6) + p('M14 17H18', 'none', '#784c70', 1.5),
  books: p('M1 5L7 3V21L1 22Z', '#e8a43c', '#b47c28') + p('M7 5L13 3V22H7Z', '#60b048') + p('M12 7L23 2V17L12 22Z', '#2c84cc', '#1c64a8'),
  info: p('M9 1Q22 2 24 14L18 14Q16 7 9 7Z', '#5c94e0', '#3068b8') + c(9, 15, 8, '#2880d8', '#1c60b0') + p('M9 9V11M9 13V20', 'none', '#fff', 3),
  webDoc: p('M4 2H14L21 8V22H4Z', '#f6fafa', '#38707c', 1.6) + c(12, 15, 5, '#209078') + p('M10 13H14M10 17H14', 'none', '#c8f0e4', 1.5) + p('M14 2V7L20 8', 'none', '#38707c', 1.4),
  clock: c(12, 12, 10, '#e4e6f0', '#6c7494', 2) + p('M12 5V13H18', 'none', '#3c4878', 2),
  pen: p('M0 4H6L8 7V24H0Z', '#44484c') + p('M3 14H6V24H3Z', '#8c8868') + p('M8 7Q13 1 22 3', 'none', '#666', 1.4) + p('M13 11H16M13 19H16', 'none', '#aaa'),
  dock: p('M3 4H21V20H3ZM3 6H21', 'none', '#333', 1.8),
  history: c(12, 12, 9.5, '#eef2f4', '#687c8c', 2) + p('M12 5V13H17', 'none', '#3c5870', 2),
  views: p('M3 8Q8 1 18 4L22 12L17 20H7Z', '#58b490', '#2c8464') + p('M7 10Q12 5 17 10V15H12Z', '#c4ecdc') + p('M15 17H23V22H15Z', '#98946c'),
  tick: p('M1 11L8 14L20 3L23 5L10 21L5 19Z', '#38b83c'),
  camera: p('M2 8L13 3L23 7V15L13 21L5 20Z', '#a86c6c', '#704444') + p('M9 10L19 8V14L13 18Z', '#d0a8a0'),
  folder: p('M1 5H13L23 11V17L13 22L1 20Z', '#e8b83c', '#a07c20') + p('M2 6H13L20 11L3 13Z', '#f8dc84'),
  folderUser: p('M1 7H13L22 12V17L13 23L1 21Z', '#e8b83c', '#a07c20') + p('M2 8H13L19 12L3 14Z', '#f8dc84') + p('M14 2H22V6H16Z', '#eee', '#666'),
  datum: p('M3 3L12 13L20 5M12 13V22M3 3V14L12 22', 'none', '#666', 1.7),
  block: p('M2 4H22V20H2Z', '#e09c4c', '#a8702c'),
  chevron: p('M5 6L12 18L19 6', 'none', '#3c7cac', 2.4)
};

const svg = (name) => {
  const fit = name === 'pen' ? ' preserveAspectRatio="none"' : '';
  return `<svg viewBox="0 0 24 24"${fit} aria-hidden="true">${icons[name]}</svg>`;
};

// "|" separator, "#" grip, "." drop-down, "," toolbar options, "*" pressed
const tool = (t) => {
  if (t === '|') return '<span class="sep"></span>';
  if (t === '#') return '<span class="grip"></span>';
  if (t === '.') return '<button class="dot" aria-label="更多"><i class="dot-mark"></i></button>';
  if (t === ',') return '<button class="more" aria-label="工具条选项"><i class="dot-mark"></i></button>';
  const on = t.startsWith('*');
  const name = on ? t.slice(1) : t;
  return `<button class="tool${on ? ' on' : ''}" aria-label="${name}">${svg(name)}</button>`;
};

document.querySelectorAll('[data-tools]').forEach((el) => {
  el.innerHTML = el.dataset.tools.split(' ').map(tool).join('');
});

document.querySelectorAll('[data-icon]').forEach((el) => {
  el.innerHTML = svg(el.dataset.icon);
});
```
